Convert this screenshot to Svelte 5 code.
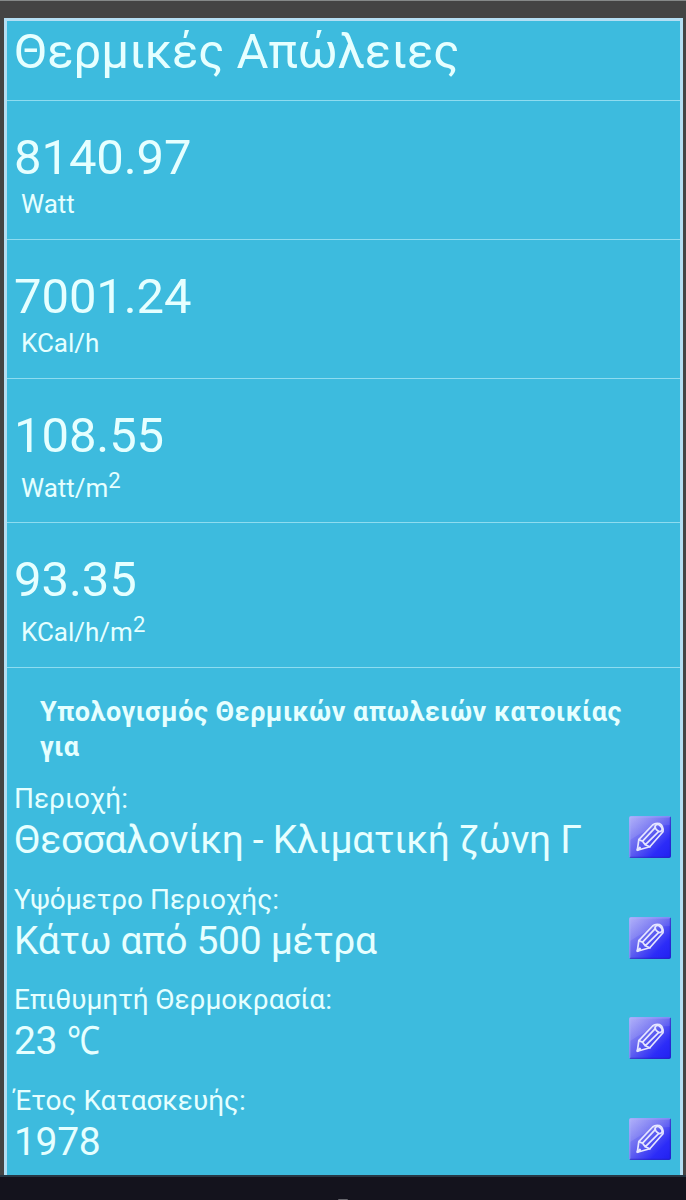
<script>
  const stats = [
    { value: '8140.97', unit: 'Watt', squared: false },
    { value: '7001.24', unit: 'KCal/h', squared: false },
    { value: '108.55', unit: 'Watt/m', squared: true },
    { value: '93.35', unit: 'KCal/h/m', squared: true },
  ];
  const fields = [
    { label: 'Περιοχή:', value: 'Θεσσαλονίκη - Κλιματική ζώνη Γ' },
    { label: 'Υψόμετρο Περιοχής:', value: 'Κάτω από 500 μέτρα' },
    { label: 'Επιθυμητή Θερμοκρασία:', value: '23', degree: '℃' },
    { label: 'Έτος Κατασκευής:', value: '1978' },
  ];
</script>

<div class="screen">
  <main class="panel">
    <h1>Θερμικές Απώλειες</h1>
    {#each stats as s}
      <section class="stat" class:squared={s.squared}>
        <div class="number">{s.value}</div>
        <div class="unit">{s.unit}{#if s.squared}<sup>2</sup>{/if}</div>
      </section>
    {/each}
    <h2>Υπολογισμός Θερμικών απωλειών κατοικίας για</h2>
    {#each fields as f}
      <div class="field">
        <div class="text">
          <div class="label">{f.label}</div>
          <div class="value">{f.value}{#if f.degree}&nbsp;<span class="degree">{f.degree}</span>{/if}</div>
        </div>
        <button aria-label={f.label}>
          <svg viewBox="0 0 42 42" width="42" height="42">
            <defs>
              <linearGradient id="face" x1="0" y1="0" x2="1" y2="1">
                <stop offset="0" stop-color="#a4a4f8" />
                <stop offset=".45" stop-color="#6464f0" />
                <stop offset=".75" stop-color="#2c2cf8" />
                <stop offset="1" stop-color="#2020f0" />
              </linearGradient>
              <linearGradient id="gloss" x1="0" y1="0" x2=".8" y2="1">
                <stop offset="0" stop-color="#fff" stop-opacity=".16" />
                <stop offset="1" stop-color="#fff" stop-opacity=".05" />
              </linearGradient>
            </defs>
            <rect width="42" height="42" rx="2" fill="url(#face)" />
            <path d="M1 1H41V9C27 9 15 15 1 24Z" fill="url(#gloss)" />
            <path d="M.8 41V2Q.8.8 2 .8H41" fill="none" stroke="#a9bdff" stroke-opacity=".65" />
            <path d="M1 41.3H40Q41.3 41.3 41.3 40V1" fill="none" stroke="#2626ac" stroke-opacity=".6" />
            <g fill="none" stroke="#e6e6ff" stroke-width="1.7" stroke-linejoin="round" stroke-linecap="round">
              <path d="M8.3 34.3L9.8 23.6L23.6 9Q26 6.8 30.4 7.6Q34.8 10 34 15.8L20.8 30.8Z" />
              <path d="M9.8 23.6L13.6 25.2L16.2 28.8L20.8 30.8M13.6 25.2L26.4 11.4M16.2 28.8L29.6 15.6" />
              <ellipse cx="29.6" cy="12" rx="2.7" ry="4" transform="rotate(-45 29.6 12)" />
              <path d="M8.8 33.6L10.8 32" stroke-width="2.6" />
            </g>
          </svg>
        </button>
      </div>
    {/each}
  </main>
  <footer><span></span></footer>
</div>

<style>
  :global(body) { background: #444; }
  .screen {
    box-sizing: border-box;
    width: 686px;
    height: 1200px;
    overflow: hidden;
    padding-top: 17px;
    border-top: 1px solid #858989;
    background: #444;
    display: flex;
    flex-direction: column;
    font-family: Roboto, sans-serif;
    color: #e6ffff;
  }
  .panel {
    box-sizing: border-box;
    height: 1157px;
    margin: 0 3px 0 4px;
    border: 3px solid #b4def3;
    border-bottom: 0;
    background: #3dbbde;
    overflow: hidden;
    flex: none;
  }
  h1, .number {
    margin: 0;
    font-size: 49px;
    letter-spacing: -.1px;
    line-height: 60px;
    font-weight: 400;
    padding-left: 7px;
    white-space: nowrap;
  }
  h1 {
    height: 79px;
    padding-top: 1px;
    box-sizing: border-box;
  }
  .stat {
    box-sizing: border-box;
    height: 139px;
    padding-top: 27px;
    border-top: 1px solid #8edcf0;
  }
  .stat.squared { height: 144.4px; }
  .unit {
    padding-left: 14px;
    font-size: 26px;
    line-height: 32px;
    white-space: nowrap;
  }
  .squared .unit { padding-top: 5.5px; }
  sup { font-size: 22px; line-height: 0; vertical-align: 9px; }
  h2 {
    margin: 0;
    padding: 27px 30px 0 33px;
    height: 115.6px;
    box-sizing: border-box;
    border-top: 1px solid #8edcf0;
    font-size: 27px;
    letter-spacing: .5px;
    line-height: 35px;
    font-weight: 700;
  }
  .field {
    height: 100.5px;
    display: flex;
    justify-content: space-between;
    padding: 0 9px 0 7px;
  }
  .label { font-size: 28px; line-height: 34px; letter-spacing: -.03px; white-space: nowrap; }
  .value { font-size: 39px; line-height: 49px; letter-spacing: -.32px; white-space: nowrap; }
  .degree { display: inline-block; line-height: 1; transform: scaleX(.85); transform-origin: left; }
  button {
    margin: 34px 0 0;
    padding: 0;
    width: 42px;
    height: 42px;
    border: 0;
    background: none;
    flex: none;
  }
  svg { display: block; }
  footer {
    flex: 1;
    background: #14131d;
    border-top: 2px solid #263744;
    display: flex;
    justify-content: center;
    align-items: flex-end;
  }
  footer span { width: 10px; height: 1px; border-radius: 5px 5px 0 0; background: #66666c; }
</style>
